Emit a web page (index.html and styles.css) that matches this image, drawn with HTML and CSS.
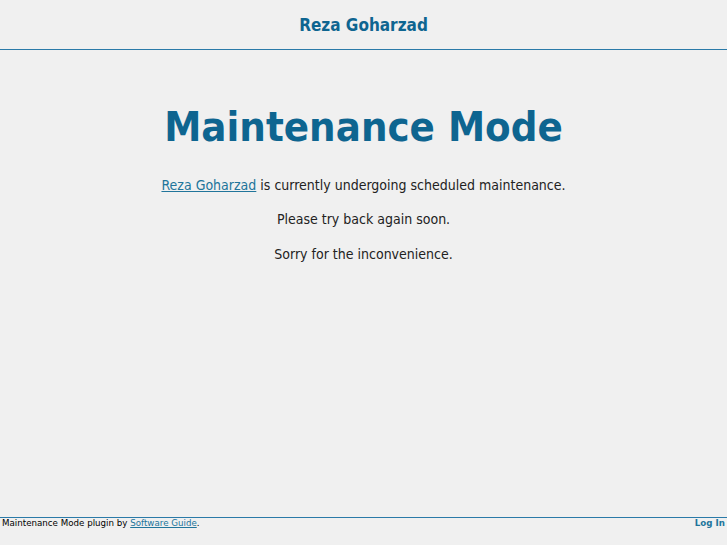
FILE: index.html
```html
<!DOCTYPE html>
<html>
<head>
<meta charset="utf-8">
<link rel="stylesheet" href="styles.css">
</head>
<body>
<div class="page">
  <header class="header">
    <div class="site-title">Reza Goharzad</div>
  </header>
  <main class="main">
    <h1 class="title">Maintenance Mode</h1>
    <p class="msg"><a href="#">Reza Goharzad</a> is currently undergoing scheduled maintenance.</p>
    <p class="msg">Please try back again soon.</p>
    <p class="msg msg-last">Sorry for the inconvenience.</p>
  </main>
  <footer class="footer">
    <div class="credit">Maintenance Mode plugin by <a href="#">Software Guide</a>.</div>
    <a class="login" href="#">Log In</a>
  </footer>
</div>
</body>
</html>
```
FILE: styles.css
```css
html, body {
  margin: 0;
  padding: 0;
  height: 100%;
  background: #f0f0f0;
  font-family: "DejaVu Sans Condensed", "DejaVu Sans", sans-serif;
  font-stretch: condensed;
  color: #222;
}
.page {
  display: flex;
  flex-direction: column;
  min-height: 100%;
}
.header {
  height: 49px;
  border-bottom: 1px solid #2a7aa8;
  display: flex;
  align-items: center;
  justify-content: center;
}
.site-title {
  font-weight: bold;
  font-size: 17px;
  color: #0e6590;
  padding-top: 1px;
}
.main {
  flex: 1;
  text-align: center;
  padding-top: 54px;
}
.title {
  margin: 0 0 27px;
  font-size: 41.5px;
  font-weight: bold;
  color: #0e6590;
  line-height: 46px;
}
.msg {
  margin: 0 0 16px;
  font-size: 14px;
  line-height: 17px;
}
.msg + .msg {
  margin-top: 17px;
}
.msg.msg-last {
  margin-top: 18px;
}
.msg a {
  color: #21759b;
}
.footer {
  box-sizing: border-box;
  border-top: 1px solid #2a7aa8;
  height: 28px;
  display: flex;
  justify-content: space-between;
  align-items: flex-start;
  padding: 0 2px 0;
  font-family: "DejaVu Sans", sans-serif;
  font-stretch: normal;
  font-size: 8.7px;
  line-height: 11px;
}
.credit {
  color: #000;
}
.credit a {
  color: #21759b;
}
.login {
  color: #21759b;
  font-weight: bold;
  text-decoration: none;
}
```
